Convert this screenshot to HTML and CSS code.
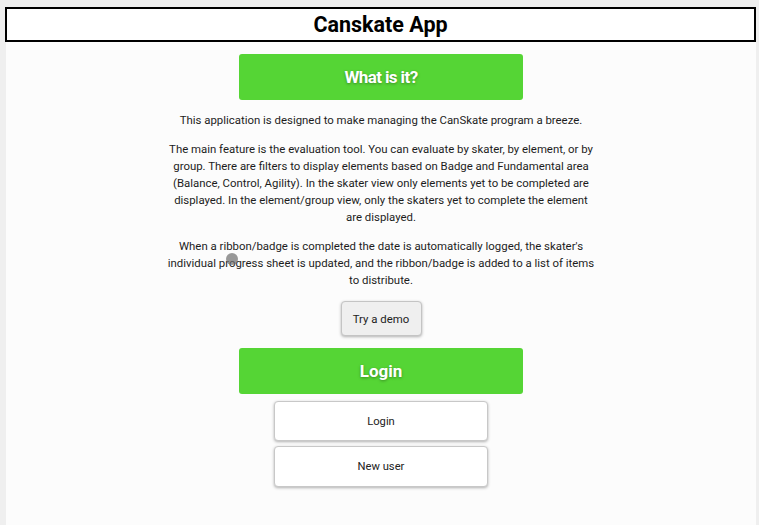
FILE: index.html
```html
<!DOCTYPE html>
<html lang="en">
<head>
<meta charset="utf-8">
<title>Canskate App</title>
<link rel="stylesheet" href="styles.css">
</head>
<body>
<div class="panel">
  <header class="app-header"><h1 class="app-title">Canskate App</h1></header>
  <main class="content">
    <div class="section-bar section-bar--first">What is it?</div>
    <p class="intro intro--first">This application is designed to make managing the CanSkate program a breeze.</p>
    <p class="intro">The main feature is the evaluation tool. You can evaluate by skater, by element, or by group. There are filters to display elements based on Badge and Fundamental area (Balance, Control, Agility). In the skater view only elements yet to be completed are displayed. In the element/group view, only the skaters yet to complete the element are displayed.</p>
    <p class="intro">When a ribbon/badge is completed the date is automatically logged, the skater's individual progress sheet is updated, and the ribbon/badge is added to a list of items to distribute.</p>
    <button class="demo-btn" type="button">Try a demo</button>
    <div class="section-bar section-bar--login">Login</div>
    <button class="auth-btn auth-btn--login" type="button">Login</button>
    <button class="auth-btn auth-btn--new" type="button">New user</button>
  </main>
  <span class="cursor-dot"></span>
</div>
</body>
</html>
```
FILE: styles.css
```css
html, body {
  margin: 0;
  height: 100%;
}
body {
  background: #efefef;
  padding: 6px 3px 0 6px;
  box-sizing: border-box;
  font-family: Roboto, "Liberation Sans", Arial, sans-serif;
}
.panel {
  position: relative;
  background: #fcfcfc;
  min-height: 100%;
  box-sizing: border-box;
}
.app-header {
  border: 2px solid #000;
  background: #fff;
  height: 35px;
  box-sizing: border-box;
  margin-top: 1px;
  margin-left: -1px;
  display: flex;
  align-items: center;
  justify-content: center;
}
.app-title {
  margin: 0;
  font-size: 21.5px;
  font-weight: 700;
  color: #000;
  line-height: 1;
}
.content {
  display: flex;
  flex-direction: column;
  align-items: center;
}
.section-bar {
  width: 284px;
  height: 46px;
  background: #55d535;
  border-radius: 3px;
  color: #fff;
  font-weight: 700;
  font-size: 17px;
  display: flex;
  align-items: center;
  justify-content: center;
  text-shadow: 0 1px 3px rgba(0, 0, 0, 0.35);
}
.section-bar--first {
  margin-top: 12px;
  letter-spacing: -0.6px;
}
.section-bar--login {
  margin-top: 12px;
}
.intro {
  width: 432px;
  margin: 12px 0 0;
  text-align: center;
  font-size: 11.4px;
  line-height: 17px;
  color: #1c1c1c;
}
.demo-btn {
  margin-top: 12px;
  width: 81px;
  height: 35px;
  background: #efefef;
  border: 1px solid #c4c4c4;
  border-radius: 4px;
  box-shadow: 0 1px 3px rgba(0, 0, 0, 0.3);
  font-family: inherit;
  font-size: 11.4px;
  color: #222;
  padding: 0;
}
.auth-btn {
  width: 214px;
  background: #fff;
  border: 1px solid #c8c8c8;
  border-radius: 4px;
  box-shadow: 0 1px 3px rgba(0, 0, 0, 0.3);
  font-family: inherit;
  font-size: 11.2px;
  color: #222;
  padding: 0;
}
.auth-btn--login {
  margin-top: 7px;
  height: 40px;
}
.auth-btn--new {
  margin-top: 5px;
  height: 41px;
}
.cursor-dot {
  position: absolute;
  left: 220px;
  top: 246px;
  width: 12px;
  height: 12px;
  border-radius: 50%;
  background: rgba(110, 110, 110, 0.7);
}
```
